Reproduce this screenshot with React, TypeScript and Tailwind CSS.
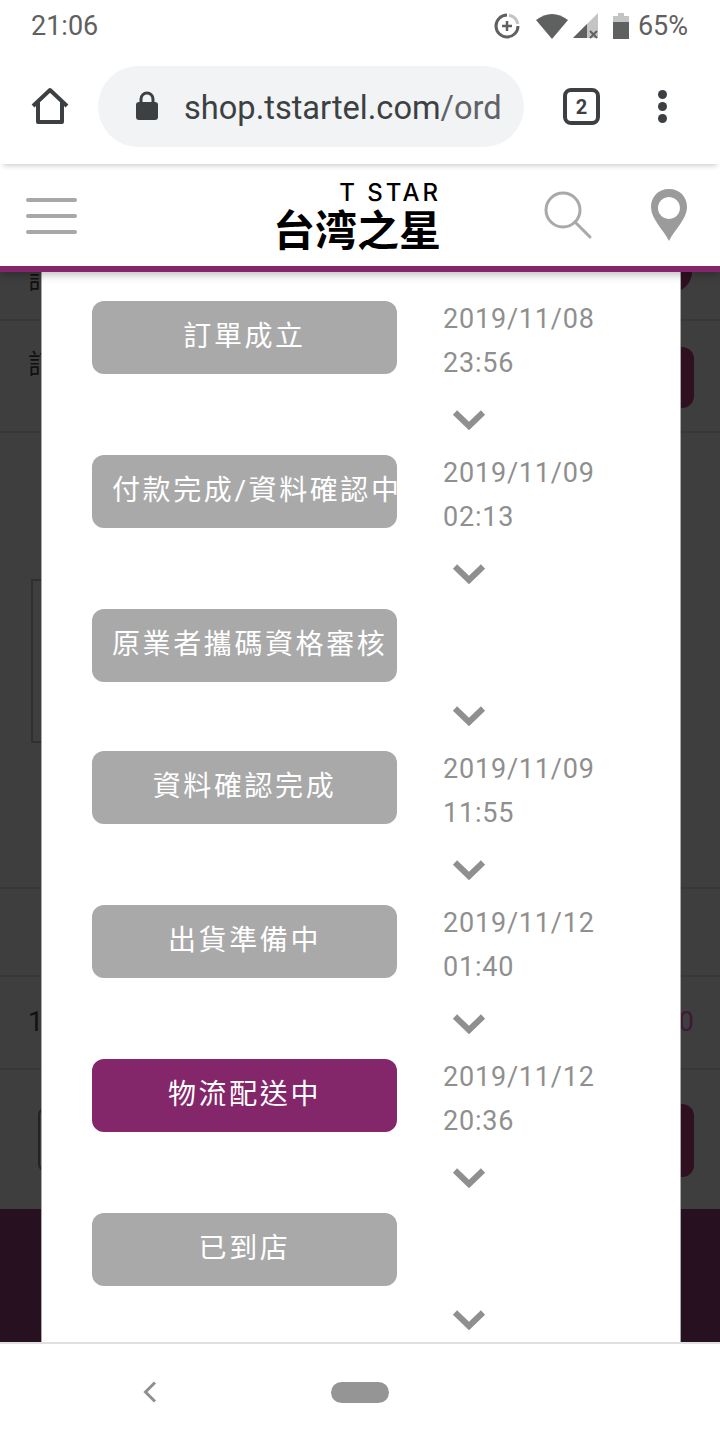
type Step = { label: string; date?: string; time?: string; active?: boolean };

const steps: Step[] = [
  { label: "訂單成立", date: "2019/11/08", time: "23:56" },
  { label: "付款完成/資料確認中", date: "2019/11/09", time: "02:13" },
  { label: "原業者攜碼資格審核" },
  { label: "資料確認完成", date: "2019/11/09", time: "11:55" },
  { label: "出貨準備中", date: "2019/11/12", time: "01:40" },
  { label: "物流配送中", date: "2019/11/12", time: "20:36", active: true },
  { label: "已到店" },
];

function Chevron() {
  return (
    <svg width="34" height="22" viewBox="0 0 34 22" className="ml-[9px]">
      <path d="M3 3.5 L17 17 L31 3.5" fill="none" stroke="#8f8f8f" strokeWidth="6" />
    </svg>
  );
}

function StatusBar() {
  return (
    <div className="flex h-[52px] shrink-0 items-center justify-between bg-white pl-[31px] pr-[32px] text-[27px] text-[#5f6060]">
      <span>21:06</span>
      <div className="flex items-center">
        <svg width="26" height="26" viewBox="0 0 26 26" className="mr-[16px]">
          <path d="M13 2 A11 11 0 1 0 24 13" fill="none" stroke="#5f6060" strokeWidth="3" />
          <path d="M15 2.3 A11 11 0 0 1 23.8 11" fill="none" stroke="#c4c4c4" strokeWidth="3" />
          <path d="M13 8 V18 M8 13 H18" stroke="#5f6060" strokeWidth="2.5" />
        </svg>
        <svg width="32" height="25" viewBox="0 0 32 25">
          <path d="M0 6 Q16 -6 32 6 L16 25 Z" fill="#5f6060" />
        </svg>
        <svg width="26" height="26" viewBox="0 0 26 26" className="ml-[5px]">
          <path d="M0 25 L25 0 V25 Z" fill="#c4c4c4" />
          <path d="M0 25 L14 11 V25 Z" fill="#5f6060" />
          <path d="M17 18 L24 25 M24 18 L17 25" stroke="#5f6060" strokeWidth="2" />
        </svg>
        <svg width="16" height="26" viewBox="0 0 16 26" className="ml-[14px]">
          <path d="M5 0 H11 V3 H16 V9 H0 V3 H5 Z" fill="#c4c4c4" />
          <rect x="0" y="9" width="16" height="17" fill="#5f6060" />
        </svg>
        <span className="ml-[9px]">65%</span>
      </div>
    </div>
  );
}

function BrowserBar() {
  return (
    <div className="z-20 flex h-[112px] shrink-0 items-start bg-white pl-[31px] pt-[14px] shadow-[0_5px_5px_-3px_rgba(0,0,0,0.18)]">
      <svg width="38" height="38" viewBox="0 0 38 38" className="mt-[21px]">
        <path d="M2 19 L19 3 L36 19 M7 15 V35 H31 V15" fill="none" stroke="#3c4043" strokeWidth="4" strokeLinejoin="round" />
      </svg>
      <div className="ml-[29px] flex h-[81px] w-[426px] items-center overflow-hidden rounded-full bg-[#f1f3f4] pl-[37px]">
        <svg width="24" height="29" viewBox="0 0 24 29" className="mb-[2px] shrink-0">
          <path d="M6 12 V8 A6 6 0 0 1 18 8 V12" fill="none" stroke="#3c4043" strokeWidth="3" />
          <rect x="1" y="11" width="22" height="18" rx="3" fill="#3c4043" />
        </svg>
        <div className="ml-[25px] mt-[4px] w-[319px] overflow-hidden whitespace-nowrap text-[32.6px] text-[#3c4043]">
          shop.tstartel.com<span className="text-[#5f6368]">/ord</span>
        </div>
      </div>
      <div className="ml-[39px] mt-[22px] flex h-[37px] w-[37px] items-center justify-center rounded-[8px] border-[4px] border-[#3c4043] text-[20px] font-bold text-[#3c4043]">
        2
      </div>
      <div className="ml-[58px] mt-[24px] flex flex-col gap-[3px]">
        <span className="h-[9px] w-[9px] rounded-full bg-[#3c4043]" />
        <span className="h-[9px] w-[9px] rounded-full bg-[#3c4043]" />
        <span className="h-[9px] w-[9px] rounded-full bg-[#3c4043]" />
      </div>
    </div>
  );
}

function SiteHeader() {
  return (
    <div className="z-10 flex h-[108px] shrink-0 items-start border-b-[6px] border-[#84266a] bg-white shadow-[0_3px_8px_rgba(0,0,0,0.25)]">
      <div className="ml-[26px] mt-[34px] flex w-[51px] flex-col gap-[12px]">
        <span className="h-[4px] rounded-full bg-[#a8a8a8]" />
        <span className="h-[4px] rounded-full bg-[#a8a8a8]" />
        <span className="h-[4px] rounded-full bg-[#a8a8a8]" />
      </div>
      <div className="ml-[198px] mt-[18px] flex w-[166px] flex-col items-end text-black">
        <span className="text-[24px] leading-[22px] tracking-[3px] font-['Inter',sans-serif] font-medium">T STAR</span>
        <span className="whitespace-nowrap text-[42px] font-semibold leading-[48px] font-['Noto_Sans_CJK_TC',sans-serif]">台湾之星</span>
      </div>
      <svg width="50" height="50" viewBox="0 0 50 50" className="ml-[102px] mt-[26px]">
        <circle cx="20" cy="20" r="17" fill="none" stroke="#a9a9a9" strokeWidth="3" />
        <path d="M32 32 L47 47" stroke="#a9a9a9" strokeWidth="3" strokeLinecap="round" />
      </svg>
      <svg width="38" height="52" viewBox="0 0 38 52" className="ml-[57px] mt-[25px]">
        <path fillRule="evenodd" d="M19 0 C8 0 1 8 1 18 C1 30 13 40 19 52 C25 40 37 30 37 18 C37 8 30 0 19 0 Z M19 8 A11 11 0 1 1 18.9 8 Z" fill="#9b9b9b" />
      </svg>
    </div>
  );
}

// dimmed order page behind the popup
function BackgroundPage() {
  return (
    <div className="flex h-full flex-col bg-[#3e3e3e] text-[27px] text-[#111]">
      <div className="flex h-[49px] shrink-0 items-start justify-between overflow-hidden border-b-2 border-[#373737] pl-[28px] pr-[28px]">
        <span className="-mt-[12px]">訂</span>
        <span className="-mt-[20px] h-[40px] w-[40px] rounded-full bg-[#2e1020]" />
      </div>
      <div className="flex h-[112px] shrink-0 items-start justify-between border-b-2 border-[#373737] pl-[28px] pr-[26px]">
        <span className="mt-[24px]">訂</span>
        <span className="mt-[26px] h-[61px] w-[100px] rounded-xl bg-[#2e1020]" />
      </div>
      <div className="ml-[31px] mt-[146px] h-[164px] w-[60px] shrink-0 border-2 border-[#303030]" />
      <div className="mt-[144px] h-[90px] shrink-0 border-y-2 border-[#373737]" />
      <div className="flex h-[93px] shrink-0 items-center justify-between border-b-2 border-[#373737] pl-[28px] pr-[26px]">
        <span>1</span>
        <span className="text-[#3f1836]">0</span>
      </div>
      <div className="flex h-[139px] shrink-0 items-start justify-between pl-[38px] pr-[26px]">
        <span className="mt-[37px] h-[65px] w-[60px] rounded-lg border-2 border-[#222]" />
        <span className="mt-[34px] h-[73px] w-[100px] rounded-xl bg-[#2e1020]" />
      </div>
      <div className="flex-1 bg-[#27101f]" />
    </div>
  );
}

function StepRow({ step }: { step: Step }) {
  return (
    <div className="shrink-0">
      <div className={`flex items-start ${step.date ? "h-[88px]" : "h-[76px]"}`}>
        <div
          className={`mt-[5px] h-[73px] w-[305px] shrink-0 overflow-hidden whitespace-nowrap rounded-xl px-5 text-center text-[28px] leading-[71px] tracking-[2.6px] text-white ${
            step.active ? "bg-[#84266a]" : "bg-[#a9a9a9]"
          }`}
        >
          {step.label}
        </div>
        {step.date && (
          <div className="ml-[46px] mt-px text-[27px] leading-[44px] tracking-[0.8px] text-[#8f8f8f]">
            <div>{step.date}</div>
            <div>{step.time}</div>
          </div>
        )}
      </div>
      <div className="ml-[351px] h-[66px] pt-[25px]">
        <Chevron />
      </div>
    </div>
  );
}

export default function App() {
  return (
    <div className="flex h-[1440px] w-[720px] flex-col overflow-hidden bg-white font-['Roboto','Noto_Sans_CJK_TC',sans-serif]">
      <StatusBar />
      <BrowserBar />
      <SiteHeader />
      <div className="relative flex-1 overflow-hidden">
        <BackgroundPage />
        <div className="absolute bottom-0 left-[41px] top-0 flex w-[640px] flex-col overflow-hidden border-x border-[#a8a8a8] bg-white pl-[50px] pt-6">
          {steps.map((s) => (
            <StepRow key={s.label} step={s} />
          ))}
        </div>
      </div>
      <div className="flex h-[98px] shrink-0 items-center border-t-2 border-[#e0e0e0] bg-white">
        <svg width="16" height="24" viewBox="0 0 16 24" className="ml-[142px]">
          <path d="M13 2.5 L3.5 12 L13 21.5" fill="none" stroke="#8f8f8f" strokeWidth="3" />
        </svg>
        <span className="ml-[173px] h-[21px] w-[58px] rounded-full bg-[#959595]" />
      </div>
    </div>
  );
}
